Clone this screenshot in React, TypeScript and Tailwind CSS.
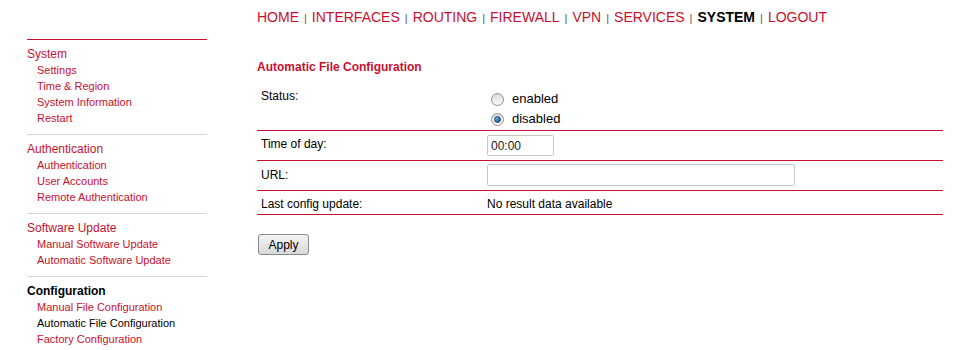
const navItems = ["HOME", "INTERFACES", "ROUTING", "FIREWALL", "VPN", "SERVICES", "SYSTEM", "LOGOUT"];

const sections = [
  { title: "System", items: ["Settings", "Time & Region", "System Information", "Restart"] },
  { title: "Authentication", items: ["Authentication", "User Accounts", "Remote Authentication"] },
  { title: "Software Update", items: ["Manual Software Update", "Automatic Software Update"] },
  {
    title: "Configuration",
    active: true,
    items: ["Manual File Configuration", "Automatic File Configuration", "Factory Configuration"],
  },
];

function Radio({ checked }: { checked?: boolean }) {
  return (
    <span className="relative ml-[4px] mr-[8px] inline-flex h-[13px] w-[13px] items-center justify-center rounded-full border border-[#8f8f8f] bg-gradient-to-b from-[#dcdcdc] to-[#fbfbfb]">
      {checked && (
        <span className="h-[7px] w-[7px] rounded-full border border-[#1b3d5c] bg-gradient-to-br from-[#6cc0f5] to-[#175a93]" />
      )}
    </span>
  );
}

export default function App() {
  return (
    <div className="flex min-h-[350px] bg-white pl-[27px] font-['Liberation_Sans',Arial,sans-serif] text-[12px] text-black">
      <aside className="mt-[39px] w-[180px] shrink-0">
        {sections.map((s, i) => (
          <div
            key={s.title}
            className={`border-t pb-[8px] pt-[6px] ${i === 0 ? "border-[#c8102e]" : "border-[#d5d5dd]"}`}
          >
            <div className={`text-[12px] leading-[16px] ${s.active ? "font-bold text-black" : "text-[#c8102e]"}`}>
              {s.title}
            </div>
            <ul className="pl-[10px]">
              {s.items.map((item) => (
                <li
                  key={item}
                  className={`text-[11px] leading-[16px] ${
                    item === "Automatic File Configuration" ? "text-black" : "text-[#c8102e]"
                  }`}
                >
                  {item}
                </li>
              ))}
            </ul>
          </div>
        ))}
      </aside>

      <main className="ml-[50px] w-[686px] pt-[9px]">
        <nav className="flex h-[16px] items-baseline whitespace-nowrap text-[14px] leading-[16px]">
          {navItems.map((n, i) => (
            <span key={n} className="flex items-baseline">
              {i > 0 && <span className="mx-[5px] text-[11px] text-[#555]">|</span>}
              <span className={n === "SYSTEM" ? "font-bold text-black" : "text-[#c8102e]"}>{n}</span>
            </span>
          ))}
        </nav>

        <h2 className="mt-[35px] text-[12px] font-bold leading-[14px] text-[#c8102e]">
          Automatic File Configuration
        </h2>

        <div className="mt-[10px]">
          <div className="grid grid-cols-[230px_1fr] border-b border-[#c8102e] pb-[1px] pt-[5px]">
            <div className="pl-[4px] leading-[14px]">Status:</div>
            <div>
              <label className="flex h-[20px] items-center text-[13px]">
                <Radio />
                enabled
              </label>
              <label className="flex h-[20px] items-center text-[13px]">
                <Radio checked />
                disabled
              </label>
            </div>
          </div>

          <div className="grid grid-cols-[230px_1fr] border-b border-[#c8102e]">
            <div className="pl-[4px] pt-[6px] leading-[14px]">Time of day:</div>
            <div className="pb-[4px] pt-[4px]">
              <input
                readOnly
                value="00:00"
                className="h-[21px] w-[67px] rounded-[2px] border border-[#c6c6c6] px-[3px] text-[12px] text-[#222] outline-none"
              />
            </div>
          </div>

          <div className="grid grid-cols-[230px_1fr] border-b border-[#c8102e]">
            <div className="pl-[4px] pt-[7px] leading-[14px]">URL:</div>
            <div className="pb-[4px] pt-[3px]">
              <input
                readOnly
                value=""
                className="h-[22px] w-[308px] rounded-[2px] border border-[#c6c6c6] px-[3px] text-[12px] outline-none"
              />
            </div>
          </div>

          <div className="grid grid-cols-[230px_1fr] border-b border-[#c8102e] pb-[3px] pt-[6px] leading-[14px]">
            <div className="pl-[4px]">Last config update:</div>
            <div>No result data available</div>
          </div>
        </div>

        <button className="ml-[1px] mt-[19px] h-[21px] w-[51px] rounded-[3px] border border-[#8a8a8a] bg-gradient-to-b from-[#f4f4f4] to-[#d9d9d9] text-[12px] leading-[20px] text-black">
          Apply
        </button>
      </main>
    </div>
  );
}
